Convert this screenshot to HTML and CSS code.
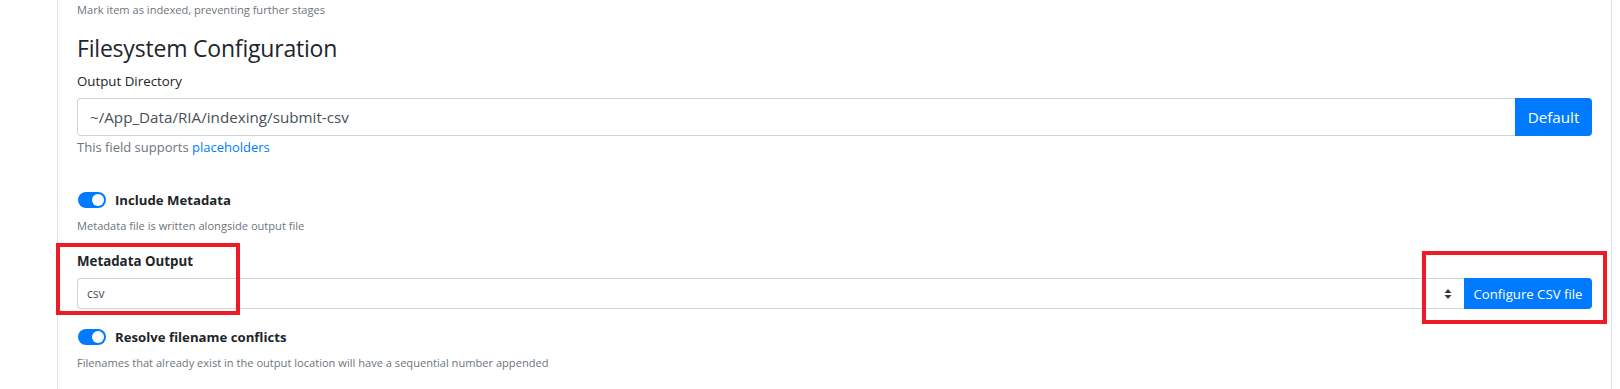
FILE: index.html
```html
<!DOCTYPE html>
<html>
<head>
    <meta charset="utf-8">
    <title>Filesystem Configuration</title>
    <link rel="stylesheet" href="styles.css">
</head>
<body>
    <div class="panel">
        <div class="hint hint-top">Mark item as indexed, preventing further stages</div>

        <h3 class="section-title">Filesystem Configuration</h3>

        <label class="field-label">Output Directory</label>
        <div class="input-group">
            <input type="text" class="form-control" value="~/App_Data/RIA/indexing/submit-csv">
            <button class="btn btn-primary">Default</button>
        </div>
        <div class="help">This field supports <a href="#">placeholders</a></div>

        <div class="switch-row switch-first">
            <span class="switch"><span class="knob"></span></span>
            <span class="switch-label">Include Metadata</span>
        </div>
        <div class="hint hint-switch">Metadata file is written alongside output file</div>

        <label class="field-label bold">Metadata Output</label>
        <div class="input-group input-group-sm">
            <div class="select">
                <span>csv</span>
                <svg class="select-arrow" width="8" height="10" viewBox="0 0 8 10">
                    <path d="M4 0L7.5 4H0.5z M4 10L0.5 6H7.5z" fill="#343a40"/>
                </svg>
            </div>
            <button class="btn btn-primary btn-sm">Configure CSV file</button>
        </div>

        <div class="switch-row switch-second">
            <span class="switch"><span class="knob"></span></span>
            <span class="switch-label">Resolve filename conflicts</span>
        </div>
        <div class="hint hint-switch">Filenames that already exist in the output location will have a sequential number appended</div>
    </div>

    <!-- annotation boxes -->
    <div class="mark mark-left"></div>
    <div class="mark mark-right"></div>
</body>
</html>
```

FILE: styles.css
```css
body {
    margin: 0;
    background: #fff;
    font-family: "Open Sans", "Noto Sans", sans-serif;
    color: #212529;
}

.panel {
    margin-left: 57px;
    width: 1555px;
    height: 389px;
    box-sizing: border-box;
    border-left: 1px solid #dee2e6;
    border-right: 1px solid #dee2e6;
    padding: 0 19px;
    display: flex;
    flex-direction: column;
    align-items: flex-start;
}

.hint {
    font-size: 11.1px;
    line-height: 16px;
    color: #6c757d;
}

.hint-top {
    margin-top: 2px;
}

.section-title {
    margin: 16px 0 0;
    font-size: 23px;
    font-weight: 400;
    line-height: 29px;
    letter-spacing: -0.2px;
}

.field-label {
    display: block;
    margin-top: 8px;
    font-size: 13.3px;
    line-height: 20px;
}

.field-label.bold {
    margin-top: 17px;
    font-weight: 700;
}

.input-group {
    display: flex;
    width: 100%;
    margin-top: 7px;
    height: 38px;
}

.form-control {
    flex: 1;
    box-sizing: border-box;
    height: 38px;
    padding: 0 12px;
    border: 1px solid #ced4da;
    border-right: none;
    border-radius: 4px 0 0 4px;
    font-family: inherit;
    font-size: 15.2px;
    color: #495057;
    outline: none;
}

.btn {
    border: none;
    font-family: inherit;
    color: #fff;
    cursor: pointer;
}

.btn-primary {
    background: #007bff;
    width: 77px;
    font-size: 15.2px;
    border-radius: 0 4px 4px 0;
}

.help {
    margin-top: 2px;
    font-size: 13px;
    line-height: 18px;
    color: #6c757d;
}

.help a {
    color: #007bff;
    text-decoration: none;
}

.switch-row {
    display: flex;
    align-items: center;
    height: 20px;
}

.switch-first {
    margin-top: 34px;
}

.switch-second {
    margin-top: 18px;
}

.switch {
    position: relative;
    width: 28px;
    height: 16px;
    border-radius: 8px;
    background: #007bff;
    margin-left: 1px;
}

.knob {
    position: absolute;
    right: 2px;
    top: 2px;
    width: 12px;
    height: 12px;
    border-radius: 50%;
    background: #fff;
}

.switch-label {
    margin-left: 9px;
    font-size: 13.2px;
    font-weight: 700;
}

.hint-switch {
    margin-top: 8px;
}

.input-group-sm {
    height: 31px;
}

.select {
    flex: 1;
    display: flex;
    align-items: center;
    justify-content: space-between;
    box-sizing: border-box;
    height: 31px;
    padding: 0 9px;
    border: 1px solid #ced4da;
    border-right: none;
    border-radius: 4px 0 0 4px;
    font-size: 12px;
    color: #495057;
}

.select-arrow {
    margin-right: 3px;
}

.btn-sm {
    width: 128px;
    font-size: 13.2px;
    border-radius: 0 4px 4px 0;
}

.mark {
    position: absolute;
    border: 4px solid #ed1c24;
}

.mark-left {
    left: 56px;
    top: 243px;
    width: 176px;
    height: 64px;
}

.mark-right {
    left: 1422px;
    top: 251px;
    width: 177px;
    height: 65px;
}
```
